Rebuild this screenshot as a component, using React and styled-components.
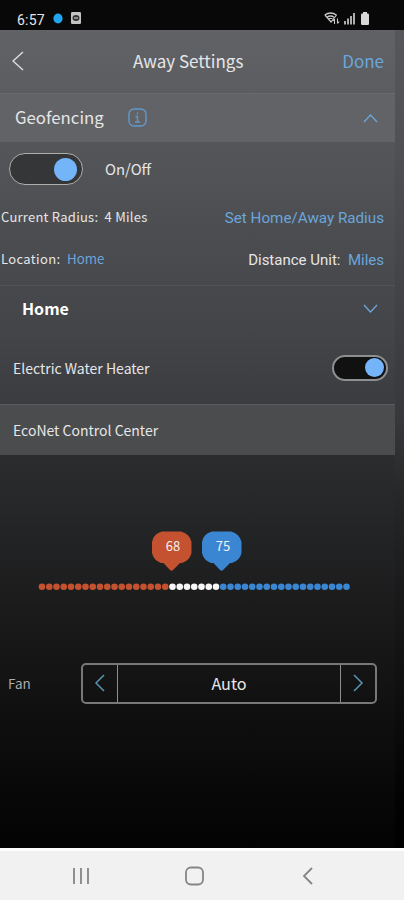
import React from "react";
import styled, { createGlobalStyle } from "styled-components";

const colors = {
  link: "#6ba6dc",
  accent: "#74b5fa",
  heat: "#c4512f",
  cool: "#3a86d2",
  text: "#e6e6e7",
  border: "#8d8e8f"
};

const GlobalStyle = createGlobalStyle`
  * {
    box-sizing: border-box;
  }

  body {
    margin: 0;
    background: #000000;
    font-family: "Noto Sans CJK SC", "Open Sans", sans-serif;
    color: ${colors.text};
  }

  svg {
    display: block;
    flex-shrink: 0;
  }
`;

const Phone = styled.div`
  width: 404px;
  height: 900px;
  display: flex;
  flex-direction: column;
  overflow: hidden;
`;

const StatusBar = styled.div`
  height: 30px;
  flex-shrink: 0;
  display: flex;
  align-items: flex-start;
  padding: 12px 35px 0 17px;
  background: #080808;
`;

const Clock = styled.span`
  width: 36px;
  font-family: Roboto, sans-serif;
  font-size: 14px;
  line-height: 16px;
  letter-spacing: 0.2px;
`;

const StatusIcons = styled.div`
  display: flex;
  align-items: flex-end;
  gap: ${item => item.gap || "3px"};
  margin-left: ${item => (item.end ? "auto" : "0")};
`;

const Body = styled.div`
  height: 818px;
  flex-shrink: 0;
  padding-right: 9px;
  background: linear-gradient(
    #55575a 0px,
    #505154 110px,
    #434447 255px,
    #37383b 390px,
    #252628 470px,
    #19191b 570px,
    #0e0e0f 670px,
    #020202 775px,
    #000000 818px
  );
`;

const Screen = styled.main`
  height: 100%;
  display: flex;
  flex-direction: column;
  background: linear-gradient(
    #606266 0px,
    #5b5d61 62px,
    #545659 112px,
    #4a4b4e 225px,
    #444548 300px,
    #3b3c40 374px,
    #2b2d2e 424px,
    #232425 500px,
    #1b1b1c 580px,
    #121213 660px,
    #090909 750px,
    #030303 818px
  );
`;

const Row = styled.div`
  height: ${item => item.height};
  flex-shrink: 0;
  display: flex;
  align-items: center;
  padding: ${item => item.pad || "0"};
`;

const Title = styled.h1`
  margin: 0 0 0 109px;
  font-size: 17px;
  font-weight: 400;
  line-height: 20px;
`;

const Section = styled(Row)`
  border-top: 1px solid ${item => item.line || "transparent"};
  background: ${item => item.fill || "transparent"};
`;

const Text = styled.span`
  font-family: ${item =>
    item.roboto ? "Roboto, sans-serif" : '"Noto Sans CJK SC", sans-serif'};
  font-size: ${item => item.size || "14px"};
  font-weight: ${item => item.weight || 400};
  line-height: 20px;
  letter-spacing: ${item => item.spacing || "0"};
  color: ${item => item.color || colors.text};
  white-space: pre;
`;

const Link = styled(Text)`
  color: ${colors.link};
`;

const Push = styled.div`
  margin-left: auto;
  padding-top: ${item => item.drop || "0"};
  display: flex;
  align-items: center;
`;

const InfoBox = styled.div`
  margin-left: 24px;
`;

const Toggle = styled.div`
  width: ${item => (item.large ? "74px" : "56px")};
  height: ${item => (item.large ? "32px" : "26px")};
  padding: ${item => (item.large ? "0 5.5px" : "0 2px")};
  margin-right: ${item => (item.large ? "22px" : "0")};
  display: flex;
  align-items: center;
  justify-content: flex-end;
  border: ${item => (item.large ? "1.5px" : "2px")} solid
    ${item => (item.large ? "#aeadaa" : "#8e8f91")};
  border-radius: 16px;
  background: ${item => (item.large ? "#353638" : "#111112")};
`;

const Knob = styled.div`
  width: ${item => (item.large ? "23px" : "19px")};
  height: ${item => (item.large ? "23px" : "19px")};
  border-radius: 50%;
  background: ${colors.accent};
`;

const Thermostat = styled.div`
  height: 177px;
  flex-shrink: 0;
  padding: 76px 0 0 38px;
`;

const Pins = styled.div`
  display: flex;
  gap: 10px;
  margin-left: 114px;
`;

const Pin = styled.div`
  width: 40px;
  height: 40px;
  padding-left: 2px;
  text-align: center;
  background: ${item => item.fill};
  clip-path: path(
    "M10 0.5H29Q37.5 2.5 39.5 11V22Q38 29.5 30 32H28L21 39Q19.5 40.5 18 39L11.5 32H9Q1.5 29.5 0 22V11Q1.5 2.5 10 0.5Z"
  );
`;

const PinValue = styled.span`
  display: block;
  font-size: 13px;
  line-height: 30px;
  color: #f1f1f1;
`;

const Track = styled.div`
  margin-top: 12px;
`;

const Picker = styled.div`
  width: 296px;
  height: 41px;
  display: flex;
  border: 2px solid #77787a;
  border-radius: 5px;
`;

const PickerCell = styled.div`
  flex: ${item => (item.wide ? "1" : "0 0 34px")};
  display: flex;
  align-items: center;
  justify-content: center;
  padding-right: ${item => (item.wide ? "0" : "1px")};
  border: solid ${colors.border};
  border-width: ${item => (item.wide ? "0 1px" : "0")};
`;

const NavBar = styled.nav`
  height: 52px;
  flex-shrink: 0;
  display: flex;
  align-items: center;
  gap: 95px;
  padding: 1px 0 0 72px;
  border-top: 3px solid #ffffff;
  background: #f1f1f1;
`;

const Chevron = ({ d, w, h, color = colors.link, stroke = 1.3 }) => (
  <svg width={w} height={h} viewBox={`0 0 ${w} ${h}`} fill="none">
    <path d={d} stroke={color} strokeWidth={stroke} />
  </svg>
);

const InfoIcon = () => (
  <svg width="19" height="19" viewBox="0 0 19 19" fill="none" stroke="#6199cd">
    <rect x="1" y="1" width="17" height="17" rx="5" strokeWidth="1.4" />
    <path d="M9.5 4.5v2M7.5 8.5h2v5.5M7 14h5" strokeWidth="1.3" />
  </svg>
);

const WifiIcon = () => (
  <svg width="16" height="13" viewBox="0 0 16 13" fill="none" stroke="#c8c8c8">
    <path d="M.7 3Q6.5-1 12.5 3M3 5.3Q6.5 2.8 10 5.3" strokeWidth="1.4" />
    <path d="M1 3L7 10L12.5 3M4.8 6.5h3.5" strokeWidth="1.2" />
    <path d="M10.5 12V7M8.8 9l1.7-2M13.5 6.5v5M15.3 9.5l-1.8 2" strokeWidth="1.1" />
  </svg>
);

const SignalIcon = () => (
  <svg width="13" height="13" viewBox="0 0 13 13" fill="#adadad">
    <rect x="0" y="9" width="2" height="3.5" />
    <rect x="3" y="6.5" width="2" height="6" />
    <rect x="6" y="4" width="2" height="8.5" />
    <rect x="9" y="1" width="2" height="11.5" />
  </svg>
);

const BatteryIcon = () => (
  <svg width="8" height="13" viewBox="0 0 8 13" fill="#d8d8d8">
    <rect x="2" y="0" width="4" height="3" />
    <rect x="0" y="1.5" width="8" height="11.5" rx="1.2" />
  </svg>
);

const AppIcon = () => (
  <svg width="10" height="12" viewBox="0 0 10 12">
    <rect width="10" height="12" rx="1.2" fill="#c4c4c4" />
    <ellipse cx="5" cy="6" rx="3.5" ry="3" fill="#333333" />
    <path d="M3 6h4" stroke="#c4c4c4" strokeWidth="1.2" />
  </svg>
);

const BlueDot = () => (
  <svg width="10" height="12" viewBox="0 0 10 12">
    <ellipse cx="5" cy="6.5" rx="4.6" ry="5" fill="#20a5ee" />
  </svg>
);

const dots = [
  ...Array(18).fill(colors.heat),
  ...Array(7).fill("#f7f7f7"),
  ...Array(18).fill(colors.cool)
];

const Scale = () => (
  <svg width="314" height="8" viewBox="0 0 314 8">
    {dots.map((fill, i) => (
      <circle key={i} cx={4 + i * 7.25} cy="3.8" r="3.3" fill={fill} />
    ))}
  </svg>
);

const App = () => {
  return (
    <Phone>
      <GlobalStyle />
      <StatusBar>
        <Clock>6:57</Clock>
        <StatusIcons gap="8px">
          <BlueDot />
          <AppIcon />
        </StatusIcons>
        <StatusIcons end gap="4px">
          <WifiIcon />
          <SignalIcon />
          <BatteryIcon />
        </StatusIcons>
      </StatusBar>
      <Body>
        <Screen>
          <Row height="63px" pad="0 11px 1px 12px">
            <Chevron w={12} h={20} d="M11 1L1 10L11 19" color="#dcdcdc" stroke={1.5} />
            <Title>Away Settings</Title>
            <Push>
              <Link size="17px">Done</Link>
            </Push>
          </Row>
          <Section height="49px" pad="0 17px 2px 15px" fill="#626366" line="#67696b">
            <Text size="16.8px">Geofencing</Text>
            <InfoBox>
              <InfoIcon />
            </InfoBox>
            <Push drop="2px">
              <Chevron w={15} h={9} d="M1 8L7.5 1L14 8" />
            </Push>
          </Section>
          <Row height="55px" pad="0 0 1px 9px">
            <Toggle large>
              <Knob large />
            </Toggle>
            <Text size="14.8px">On/Off</Text>
          </Row>
          <Row height="41px" pad="0 11px 1px 1px">
            <Text size="13px" spacing="0.24px">
              Current Radius:  4 Miles
            </Text>
            <Push drop="2px">
              <Link roboto size="15.2px">
                Set Home/Away Radius
              </Link>
            </Push>
          </Row>
          <Row height="47px" pad="0 11px 5px 1px">
            <Text size="13px" spacing="0.35px">
              Location:{"  "}
            </Text>
            <Link size="13.3px">Home</Link>
            <Push drop="2px">
              <Text roboto size="15px">
                Distance Unit:{"  "}
              </Text>
              <Link roboto size="15px">
                Miles
              </Link>
            </Push>
          </Row>
          <Section height="46px" pad="0 17px 2px 22px" line="#535457">
            <Text size="16px" weight={700} color="#ffffff">
              Home
            </Text>
            <Push drop="1px">
              <Chevron w={15} h={9} d="M1 1L7.5 8L14 1" />
            </Push>
          </Section>
          <Row height="73px" pad="0 7px 0 13px">
            <Text>Electric Water Heater</Text>
            <Push>
              <Toggle>
                <Knob />
              </Toggle>
            </Push>
          </Row>
          <Section height="51px" pad="0 13px" fill="#4b4c4e" line="#5b5c5e">
            <Text>EcoNet Control Center</Text>
          </Section>
          <Thermostat>
            <Pins>
              <Pin fill={colors.heat}>
                <PinValue>68</PinValue>
              </Pin>
              <Pin fill={colors.cool}>
                <PinValue>75</PinValue>
              </Pin>
            </Pins>
            <Track>
              <Scale />
            </Track>
          </Thermostat>
          <Row height="102px" pad="0 18px 0 8px">
            <Text size="13.5px" color="#aaaaab">
              Fan
            </Text>
            <Push>
              <Picker>
                <PickerCell>
                  <Chevron w={12} h={18} d="M10 1L2 9L10 17" color="#5795b4" stroke={1.5} />
                </PickerCell>
                <PickerCell wide>
                  <Text size="16.2px">Auto</Text>
                </PickerCell>
                <PickerCell>
                  <Chevron w={12} h={18} d="M2 1L10 9L2 17" color="#5795b4" stroke={1.5} />
                </PickerCell>
              </Picker>
            </Push>
          </Row>
        </Screen>
      </Body>
      <NavBar>
        <Chevron w={18} h={18} d="M2 1V17M9 1V17M16 1V17" color="#858585" stroke={1.8} />
        <svg width="19" height="20" viewBox="0 0 19 20" fill="none">
          <rect x="1" y="1.5" width="17" height="17" rx="5" stroke="#858585" strokeWidth="1.8" />
        </svg>
        <Chevron w={18} h={18} d="M13 1L5 9L13 17" color="#858585" stroke={1.8} />
      </NavBar>
    </Phone>
  );
};

export default App;
